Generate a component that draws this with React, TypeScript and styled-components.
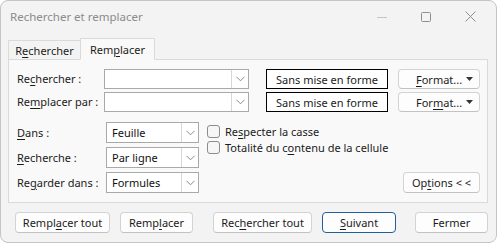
import styled, { createGlobalStyle } from "styled-components"

const Global = createGlobalStyle`
  html, body {
    margin: 0;
    padding: 0;
    background: #ffffff;
  }
  body {
    font-family: "Noto Sans", "Open Sans", sans-serif;
    font-size: 11px;
    color: #1b1b1b;
  }
`

const Window = styled.div({
  width: "497px",
  height: "243px",
  boxSizing: "border-box",
  border: "1px solid #c4c4c4",
  borderRadius: "8px",
  background: "#f3f3f3",
  display: "flex",
  flexDirection: "column",
  overflow: "hidden",
})

const TitleBar = styled.div({
  height: "37px",
  display: "flex",
  alignItems: "center",
  paddingLeft: "9px",
  boxSizing: "border-box",
})

const Title = styled.div({
  flex: "1",
  color: "#8b8b8b",
  fontSize: "11.5px",
  paddingBottom: "6px",
})

const Controls = styled.div({
  display: "flex",
  marginRight: "4px",
  paddingBottom: "6px",
})

const ControlButton = styled.div({
  width: "44px",
  height: "24px",
  display: "flex",
  alignItems: "center",
  justifyContent: "center",
})

const TabStrip = styled.div({
  height: "21px",
  display: "flex",
  alignItems: "flex-end",
  paddingLeft: "7px",
  position: "relative",
  zIndex: 1,
})

const Tab = styled.div<{ $active?: boolean; $w: number }>((p) => ({
  width: `${p.$w}px`,
  height: p.$active ? "22px" : "19px",
  marginBottom: p.$active ? "-1px" : "0",
  marginLeft: p.$active ? "-1px" : "0",
  boxSizing: "border-box",
  paddingTop: p.$active ? "2px" : "1px",
  border: "1px solid #dadada",
  borderBottom: p.$active ? "1px solid #f9f9f9" : "none",
  background: p.$active ? "#f9f9f9" : "#f3f3f3",
  display: "flex",
  justifyContent: "center",
  alignItems: "flex-start",
  lineHeight: "17px",
}))

const Panel = styled.div({
  margin: "0 8px 0 7px",
  height: "144px",
  boxSizing: "border-box",
  border: "1px solid #dadada",
  background: "#f9f9f9",
  padding: "9px 7px 9px 8px",
  display: "flex",
  flexDirection: "column",
})

const TopGrid = styled.div({
  display: "grid",
  gridTemplateColumns: "87px 145px 139px 92px",
  gridAutoRows: "20px",
  rowGap: "3px",
  alignItems: "center",
})

const Label = styled.div({
  whiteSpace: "nowrap",
  lineHeight: "20px",
})

const Combo = styled.div({
  height: "100%",
  boxSizing: "border-box",
  border: "1px solid #a9a9a9",
  background: "#ffffff",
  display: "grid",
  gridTemplateColumns: "1fr 17px",
})

const ComboText = styled.div({
  paddingLeft: "5px",
  lineHeight: "19px",
  color: "#111",
})

const ComboArrow = styled.div({
  borderLeft: "1px solid #d6d6d6",
  display: "flex",
  alignItems: "center",
  justifyContent: "center",
})

const PlainButton = styled.div({
  marginLeft: "17px",
  width: "122px",
  height: "20px",
  boxSizing: "border-box",
  border: "1px solid #000",
  background: "#ffffff",
  display: "flex",
  alignItems: "center",
  justifyContent: "center",
  whiteSpace: "nowrap",
})

const Button = styled.div<{ $w: number; $default?: boolean }>((p) => ({
  width: `${p.$w}px`,
  height: "21px",
  boxSizing: "border-box",
  border: p.$default ? "1px solid #1f5f9e" : "1px solid #d3d3d3",
  borderBottomColor: p.$default ? "#1f5f9e" : "#c2c2c2",
  borderRadius: "4px",
  background: "#fdfdfd",
  display: "flex",
  alignItems: "center",
  justifyContent: "center",
  whiteSpace: "nowrap",
  color: "#1b1b1b",
}))

const MenuButton = styled(Button)({
  marginLeft: "10px",
  height: "20px",
  justifyContent: "space-between",
  padding: "0 6px 0 17px",
})

const Lower = styled.div({
  marginTop: "10px",
  display: "grid",
  gridTemplateColumns: "89px 93px 1fr",
  gridTemplateRows: "21px 21px 21px",
  rowGap: "4px",
  alignItems: "center",
})

const Checks = styled.div({
  gridColumn: "3",
  gridRow: "1 / 3",
  alignSelf: "start",
  marginLeft: "8px",
  paddingTop: "2px",
  display: "flex",
  flexDirection: "column",
  gap: "1px",
})

const CheckRow = styled.div({
  display: "flex",
  alignItems: "center",
  gap: "5px",
  height: "15px",
})

const Box = styled.div({
  width: "13px",
  height: "13px",
  boxSizing: "border-box",
  border: "1px solid #8c8c8c",
  borderRadius: "3px",
  background: "#f6f6f6",
})

const OptionsCell = styled.div({
  gridColumn: "3",
  gridRow: "3",
  display: "flex",
  justifyContent: "flex-end",
})

const Footer = styled.div({
  marginTop: "9px",
  paddingLeft: "14px",
  display: "flex",
})

const Key = styled.span({
  textDecoration: "underline",
  textUnderlineOffset: "2px",
})

const Chevron = () => (
  <svg width="9" height="6" viewBox="0 0 9 6">
    <polyline points="0.5,0.8 4.5,4.8 8.5,0.8" fill="none" stroke="#8a8a8a" strokeWidth="1" />
  </svg>
)

const Caret = () => (
  <svg width="7" height="4" viewBox="0 0 7 4">
    <polygon points="0,0 7,0 3.5,4" fill="#333" />
  </svg>
)

export default function App() {
  return (
    <>
      <Global />
      <Window>
        <TitleBar>
          <Title>Rechercher et remplacer</Title>
          <Controls>
            <ControlButton>
              <svg width="10" height="10" viewBox="0 0 10 10">
                <line x1="0" y1="5.5" x2="10" y2="5.5" stroke="#c4c4c4" strokeWidth="1" />
              </svg>
            </ControlButton>
            <ControlButton>
              <svg width="10" height="10" viewBox="0 0 10 10">
                <rect x="0.5" y="0.5" width="9" height="9" rx="1" fill="none" stroke="#8e8e8e" strokeWidth="1" />
              </svg>
            </ControlButton>
            <ControlButton>
              <svg width="11" height="11" viewBox="0 0 11 11">
                <path d="M0.5 0.5 L10.5 10.5 M10.5 0.5 L0.5 10.5" stroke="#8e8e8e" strokeWidth="1" />
              </svg>
            </ControlButton>
          </Controls>
        </TitleBar>

        <TabStrip>
          <Tab $w={73}>
            R<Key>e</Key>chercher
          </Tab>
          <Tab $w={75} $active>
            Rem<Key>p</Key>lacer
          </Tab>
        </TabStrip>

        <Panel>
          <TopGrid>
            <Label>
              Re<Key>c</Key>hercher :
            </Label>
            <Combo>
              <ComboText />
              <ComboArrow>
                <Chevron />
              </ComboArrow>
            </Combo>
            <PlainButton>Sans mise en forme</PlainButton>
            <MenuButton $w={82}>
              <span>
                <Key>F</Key>ormat...
              </span>
              <Caret />
            </MenuButton>

            <Label>
              Re<Key>m</Key>placer par :
            </Label>
            <Combo>
              <ComboText />
              <ComboArrow>
                <Chevron />
              </ComboArrow>
            </Combo>
            <PlainButton>Sans mise en forme</PlainButton>
            <MenuButton $w={82}>
              <span>
                For<Key>m</Key>at...
              </span>
              <Caret />
            </MenuButton>
          </TopGrid>

          <Lower>
            <Label>
              <Key>D</Key>ans :
            </Label>
            <Combo>
              <ComboText>Feuille</ComboText>
              <ComboArrow>
                <Chevron />
              </ComboArrow>
            </Combo>
            <Checks>
              <CheckRow>
                <Box />
                <span>
                  Re<Key>s</Key>pecter la casse
                </span>
              </CheckRow>
              <CheckRow>
                <Box />
                <span>
                  Totalité du c<Key>o</Key>ntenu de la cellule
                </span>
              </CheckRow>
            </Checks>

            <Label>
              <Key>R</Key>echerche :
            </Label>
            <Combo>
              <ComboText>Par ligne</ComboText>
              <ComboArrow>
                <Chevron />
              </ComboArrow>
            </Combo>

            <Label>
              Re<Key>g</Key>arder dans :
            </Label>
            <Combo>
              <ComboText>Formules</ComboText>
              <ComboArrow>
                <Chevron />
              </ComboArrow>
            </Combo>
            <OptionsCell>
              <Button $w={77}>
                Op<Key>t</Key>ions &lt; &lt;
              </Button>
            </OptionsCell>
          </Lower>
        </Panel>

        <Footer>
          <Button $w={95}>
            Rempl<Key>a</Key>cer tout
          </Button>
          <Button $w={73} style={{ marginLeft: 10 }}>
            Remp<Key>l</Key>acer
          </Button>
          <Button $w={99} style={{ marginLeft: 20 }}>
            Rec<Key>h</Key>ercher tout
          </Button>
          <Button $w={74} $default style={{ marginLeft: 10 }}>
            <Key>S</Key>uivant
          </Button>
          <Button $w={73} style={{ marginLeft: 19 }}>
            Fermer
          </Button>
        </Footer>
      </Window>
    </>
  )
}
